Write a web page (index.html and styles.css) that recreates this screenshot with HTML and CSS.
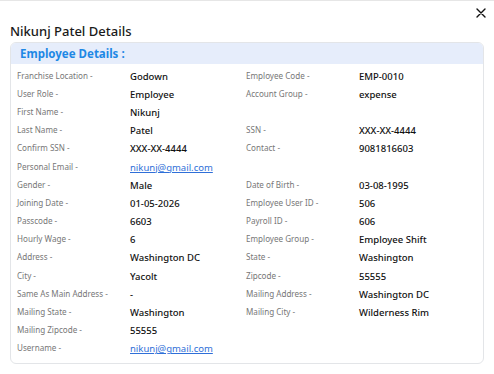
FILE: index.html
```html
<!DOCTYPE html>
<html>
<head>
<meta charset="utf-8">
<link rel="stylesheet" href="styles.css">
</head>
<body>
<div class="modal">
  <div class="topbar">
    <button class="close" aria-label="Close">
      <svg width="10" height="10" viewBox="0 0 10 10"><path d="M1 1L9 9M9 1L1 9" stroke="#111" stroke-width="1.4" stroke-linecap="round"/></svg>
    </button>
  </div>
  <h2 class="title">Nikunj Patel Details</h2>
  <div class="card">
    <div class="card-head">Employee Details :</div>
    <div class="grid">
      <div class="lbl">Franchise Location -</div><div class="val">Godown</div>
      <div class="lbl">Employee Code -</div><div class="val">EMP-0010</div>
      <div class="lbl">User Role -</div><div class="val">Employee</div>
      <div class="lbl">Account Group -</div><div class="val">expense</div>
      <div class="lbl">First Name -</div><div class="val">Nikunj</div>
      <div class="lbl"></div><div class="val"></div>
      <div class="lbl">Last Name -</div><div class="val">Patel</div>
      <div class="lbl">SSN -</div><div class="val">XXX-XX-4444</div>
      <div class="lbl">Confirm SSN -</div><div class="val">XXX-XX-4444</div>
      <div class="lbl">Contact -</div><div class="val">9081816603</div>
      <div class="lbl">Personal Email -</div><div class="val"><a class="link" href="#">nikunj@gmail.com</a></div>
      <div class="lbl"></div><div class="val"></div>
      <div class="lbl">Gender -</div><div class="val">Male</div>
      <div class="lbl">Date of Birth -</div><div class="val">03-08-1995</div>
      <div class="lbl">Joining Date -</div><div class="val">01-05-2026</div>
      <div class="lbl">Employee User ID -</div><div class="val">506</div>
      <div class="lbl">Passcode -</div><div class="val">6603</div>
      <div class="lbl">Payroll ID -</div><div class="val">606</div>
      <div class="lbl">Hourly Wage -</div><div class="val">6</div>
      <div class="lbl">Employee Group -</div><div class="val">Employee Shift</div>
      <div class="lbl">Address -</div><div class="val">Washington DC</div>
      <div class="lbl">State -</div><div class="val">Washington</div>
      <div class="lbl">City -</div><div class="val">Yacolt</div>
      <div class="lbl">Zipcode -</div><div class="val">55555</div>
      <div class="lbl">Same As Main Address -</div><div class="val">-</div>
      <div class="lbl">Mailing Address -</div><div class="val">Washington DC</div>
      <div class="lbl">Mailing State -</div><div class="val">Washington</div>
      <div class="lbl">Mailing City -</div><div class="val">Wilderness Rim</div>
      <div class="lbl">Mailing Zipcode -</div><div class="val">55555</div>
      <div class="lbl"></div><div class="val"></div>
      <div class="lbl">Username -</div><div class="val"><a class="link" href="#">nikunj@gmail.com</a></div>
      <div class="lbl"></div><div class="val"></div>
    </div>
  </div>
</div>
</body>
</html>
```
FILE: styles.css
```css
html, body {
  margin: 0;
  padding: 0;
  background: #fff;
}
body {
  font-family: "Noto Sans", "Open Sans", sans-serif;
  color: #111;
}
.modal {
  width: 494px;
  height: 374px;
  box-sizing: border-box;
  border-top: 1px solid #e6e6e6;
  padding: 0 10px;
}
.topbar {
  display: flex;
  justify-content: flex-end;
  height: 17px;
  padding-top: 6px;
  box-sizing: border-box;
}
.close {
  border: 0;
  background: none;
  padding: 0;
  margin-right: -3px;
  width: 12px;
  height: 12px;
  display: flex;
  align-items: center;
  justify-content: center;
}
.title {
  margin: 3px 0 0;
  font-size: 13px;
  font-weight: 500;
  line-height: 20px;
  color: #1a1a1a;
}
.card {
  margin-top: 1px;
  border: 1px solid #e3e5e8;
  border-radius: 6px;
  height: 322px;
  box-sizing: border-box;
  overflow: hidden;
}
.card-head {
  background: #e6edfb;
  color: #1e88e5;
  font-weight: 700;
  font-size: 11.5px;
  height: 21px;
  line-height: 21px;
  padding-left: 9px;
}
.grid {
  display: grid;
  grid-template-columns: 113px 116px 113px 1fr;
  grid-auto-rows: 18.2px;
  padding: 2px 7px 0 6px;
  align-items: center;
}
.lbl {
  font-size: 8.1px;
  color: #777;
  white-space: nowrap;
}
.val {
  font-size: 9.5px;
  font-weight: 500;
  color: #111;
  white-space: nowrap;
  padding-top: 2px;
}
.link {
  color: #2f6fd8;
  text-decoration: underline;
  font-weight: 400;
}
```
